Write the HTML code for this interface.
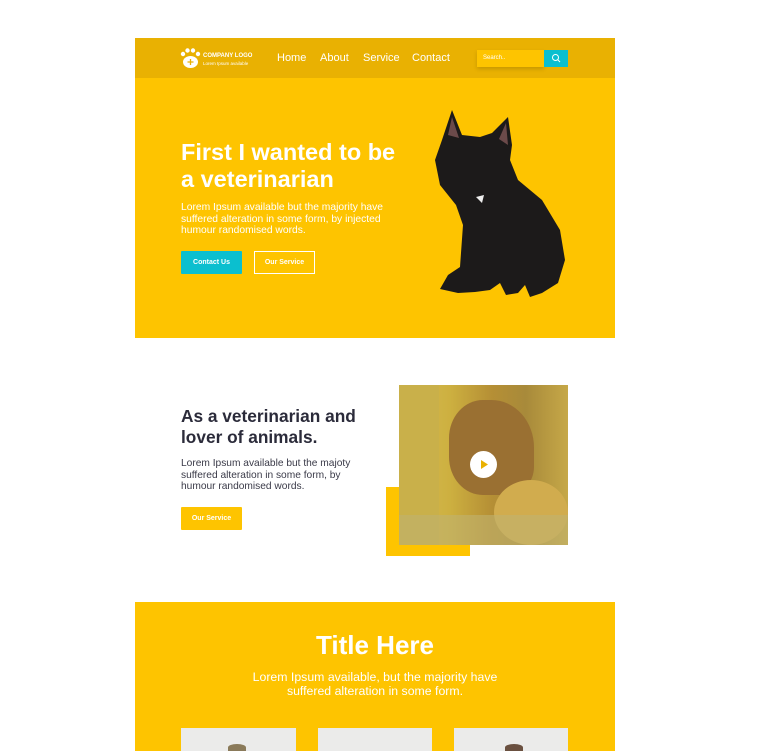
<!DOCTYPE html>
<html><head><meta charset="utf-8"><style>
*{margin:0;padding:0;box-sizing:border-box}
body{width:768px;height:751px;overflow:hidden;background:#fff;font-family:"Liberation Sans",sans-serif;position:relative}
.a{position:absolute}
</style></head><body>
<div class="a" style="left:135px;top:38px;width:480px;height:40px;background:#E9B102"></div>
<div class="a" style="left:135px;top:78px;width:480px;height:260px;background:#FEC400"></div>
<svg class="a" style="left:180px;top:47px" width="22" height="22" viewBox="0 0 22 22"><circle cx="3" cy="7" r="2.2" fill="#fff"/><circle cx="7.5" cy="3.5" r="2.2" fill="#fff"/><circle cx="13" cy="3.5" r="2.2" fill="#fff"/><circle cx="18" cy="7" r="2.2" fill="#fff"/><ellipse cx="10.5" cy="15" rx="7.5" ry="6" fill="#fff"/><path d="M10.5 12v6M7.5 15h6" stroke="#E9B102" stroke-width="1.3"/></svg>
<div class="a" style="left:203px;top:53px;color:#fff;font-size:6px;font-weight:bold">COMPANY LOGO</div>
<div class="a" style="left:203px;top:61px;color:#fff;font-size:4.5px">Lorem Ipsum available</div>
<div class="a" style="left:277px;top:52px;color:#fff;font-size:11px">Home</div>
<div class="a" style="left:320px;top:52px;color:#fff;font-size:11px">About</div>
<div class="a" style="left:363px;top:52px;color:#fff;font-size:11px">Service</div>
<div class="a" style="left:412px;top:52px;color:#fff;font-size:11px">Contact</div>
<div class="a" style="left:477px;top:50px;width:67px;height:17px;background:#FEC400;color:#fff;font-size:6px;padding:5px 0 0 6px;box-shadow:0 2px 4px rgba(0,0,0,.15)">Search..</div>
<div class="a" style="left:544px;top:50px;width:24px;height:17px;background:#0BBFCF"><svg width="24" height="17"><circle cx="11.5" cy="7.5" r="3" fill="none" stroke="#fff" stroke-width="1"/><path d="M13.7 9.7l2.3 2.3" stroke="#fff"/></svg></div>
<div class="a" style="left:181px;top:139px;color:#fff;font-size:23.5px;font-weight:bold;line-height:27px">First I wanted to be<br>a veterinarian</div>
<div class="a" style="left:181px;top:202px;color:#fff;font-size:10.3px;line-height:11.7px">Lorem Ipsum available but the majority have<br>suffered alteration in some form, by injected<br>humour randomised words.</div>
<div class="a" style="left:181px;top:251px;width:61px;height:23px;background:#0BBFCF;color:#fff;font-size:7px;font-weight:bold;text-align:center;line-height:23px;border-radius:1px">Contact Us</div>
<div class="a" style="left:254px;top:251px;width:61px;height:23px;border:1px solid #fff;color:#fff;font-size:7px;font-weight:bold;text-align:center;line-height:21px">Our Service</div>
<svg class="a" style="left:430px;top:105px" width="140" height="195" viewBox="0 0 140 195">
<path d="M22 5 L32 30 L50 32 L62 28 L78 12 L82 40 L80 55 L88 75 L112 95 L130 125 L135 155 L128 178 L112 188 L100 192 L95 180 L88 188 L76 190 L70 178 L60 185 L45 187 L28 188 L10 184 L18 170 L30 162 L33 120 L26 100 L10 80 L5 55 L12 35Z" fill="#1c1a1a"/>
<path d="M22 12 L29 33 L18 30Z M76 18 L78 40 L69 34Z" fill="#6b4a4a"/>
<path d="M46 92l8 -2 l-2 8z" fill="#eee"/>
</svg>
<div class="a" style="left:181px;top:406px;color:#2b2b3a;font-size:17.3px;font-weight:bold;line-height:20.5px">As a veterinarian and<br>lover of animals.</div>
<div class="a" style="left:181px;top:458px;color:#3a3a48;font-size:10.2px;line-height:11.7px">Lorem Ipsum available but the majoty<br>suffered alteration in some form, by<br>humour randomised words.</div>
<div class="a" style="left:181px;top:507px;width:61px;height:23px;background:#FEC400;color:#fff;font-size:7px;font-weight:bold;text-align:center;line-height:23px;border-radius:1px">Our Service</div>
<div class="a" style="left:386px;top:487px;width:84px;height:69px;background:#FEC400"></div>
<div class="a" style="left:399px;top:385px;width:169px;height:160px;background:linear-gradient(90deg,#d8bd55 0%,#cdb040 30%,#b58f35 55%,#a88a3a 75%,#c6a848 100%);overflow:hidden">
<div class="a" style="left:0;top:0;width:40px;height:160px;background:#c9b04a"></div>
<div class="a" style="left:50px;top:15px;width:85px;height:95px;background:#9a7032;border-radius:40% 50% 30% 40%"></div>
<div class="a" style="left:95px;top:95px;width:74px;height:65px;background:#d1ac4e;border-radius:50%"></div>
<div class="a" style="left:0;top:130px;width:169px;height:30px;background:#bfb270;opacity:.6"></div>
<div class="a" style="left:71px;top:66px;width:27px;height:27px;background:#fff;border-radius:50%"><svg width="27" height="27"><path d="M11 9l7 4.5-7 4.5z" fill="#E9B102"/></svg></div>
</div>
<div class="a" style="left:135px;top:602px;width:480px;height:149px;background:#FEC400"></div>
<div class="a" style="left:135px;top:630px;width:480px;text-align:center;color:#fff;font-size:26px;font-weight:bold">Title Here</div>
<div class="a" style="left:135px;top:671px;width:480px;text-align:center;color:#fff;font-size:12.3px;line-height:13.5px">Lorem Ipsum available, but the majority have<br>suffered alteration in some form.</div>
<div class="a" style="left:181px;top:728px;width:115px;height:23px;background:#ebebea"></div>
<div class="a" style="left:318px;top:728px;width:114px;height:23px;background:#ebebea"></div>
<div class="a" style="left:454px;top:728px;width:114px;height:23px;background:#ebebea"></div>
<div class="a" style="left:228px;top:744px;width:18px;height:7px;background:#8a7a5a;border-radius:50% 50% 0 0"></div>
<div class="a" style="left:505px;top:744px;width:18px;height:7px;background:#6a5040;border-radius:50% 50% 0 0"></div>
</body></html>
